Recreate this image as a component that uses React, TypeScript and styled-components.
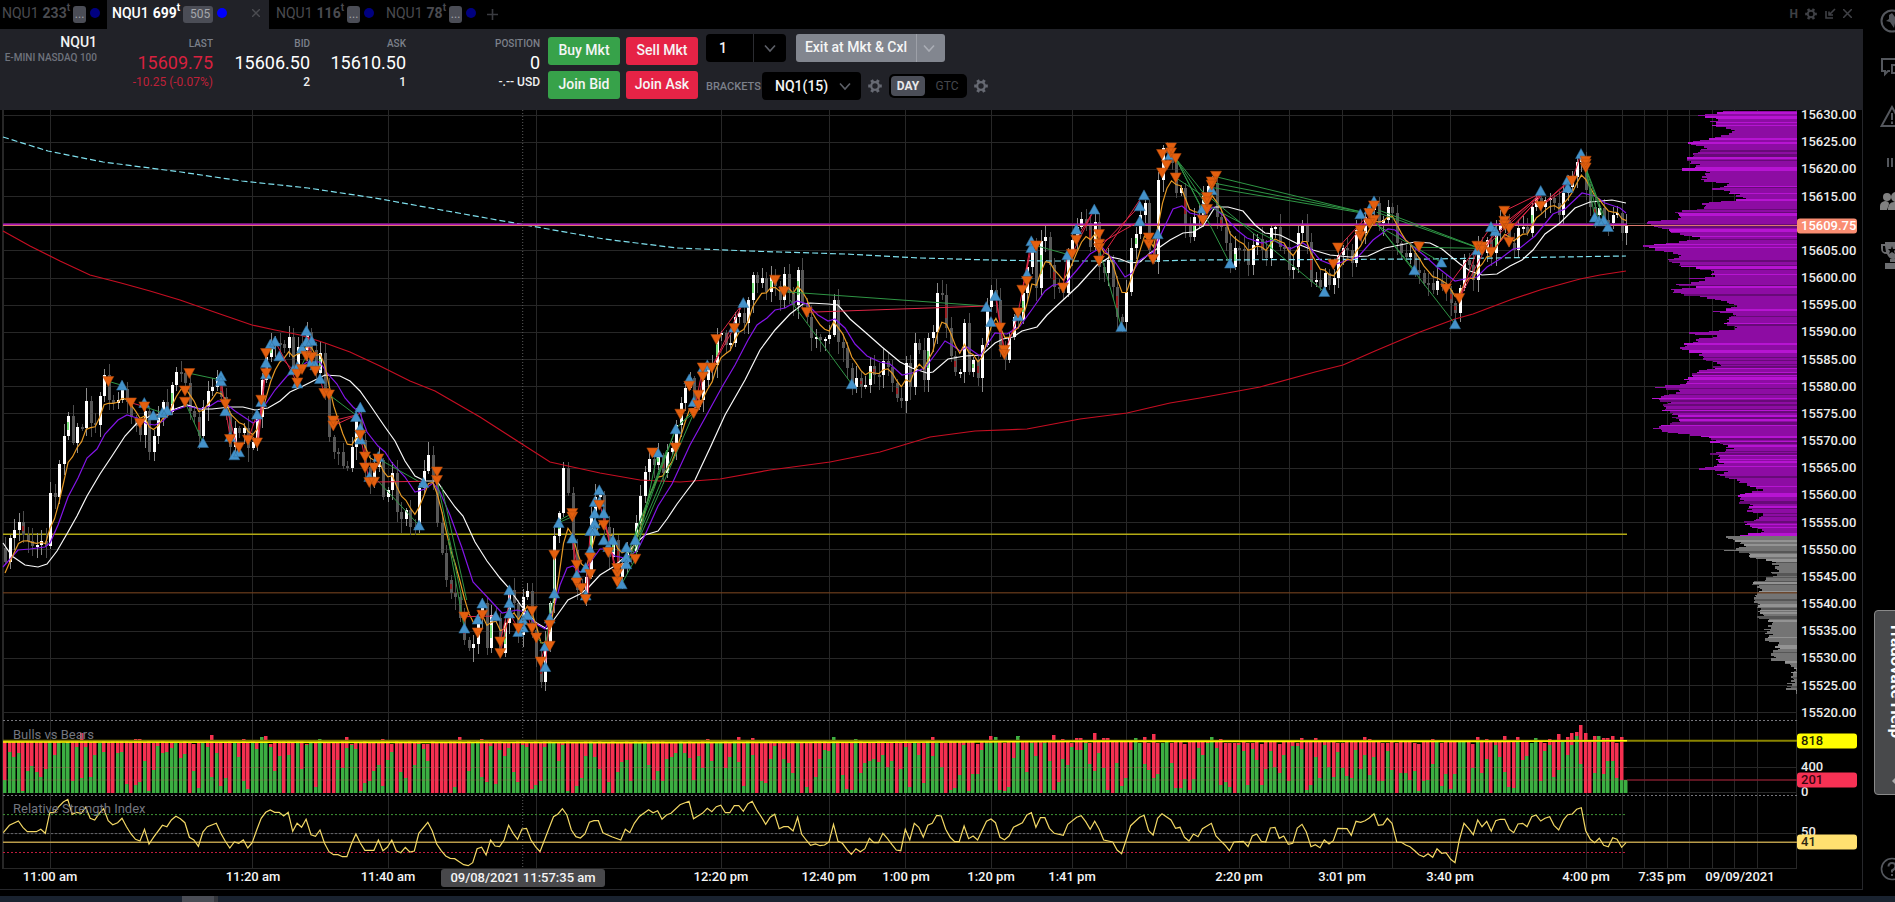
import React from "react";
import styled, { createGlobalStyle } from "styled-components";

/* ---------- series data ---------- */

const nums = (s: string) => s.trim().split(/[\s,;]+/).map(Number);

type Pt = [number, number];
const pairs = (s: string, ox = 0, oy = 0, kx = 1, ky = 1): Pt[] => {
  const n = nums(s);
  const out: Pt[] = [];
  for (let i = 0; i + 1 < n.length; i += 2) out.push([ox + n[i] * kx, oy + n[i + 1] * ky]);
  return out;
};
const T = 1 / 3;
const W = 640 / 1568;
const toPoints = (p: Pt[]) => p.map(([x, y]) => `${x.toFixed(1)},${y.toFixed(1)}`).join(" ");
const noise = (i: number, s = 1) => {
  const v = Math.sin(i * 127.1 + s * 311.7) * 43758.5453;
  return v - Math.floor(v);
};
const barX = (i: number) => 5 + i * 4.504;

const CLOSE_RUNS: { start: number; base: number; k: number; v: string }[] = [
  { start: 0, base: 300, k: T, v: "785 715 690 665 705 722 738 736 722 738 578 590 492 408 347 430 380 383 302 370 375 287 225 300 310 300 268 305 352 378 405 333 455 408 350 307 335 255 217 220 250 333 350 407 322 273 260 230 290 340 440 385 400 385 445 425 350 240 170 135 130 132 145 112 205 140 150 95 150 220 160 270 410 455 457 498 505 440 360 420 500 550 500 480 590 570 518 635 657 630 680 685 565 512 465 540 668 758 840 880" },
  { start: 100, base: 540, k: T, v: "170 235 300 325 312 230 190 325 225 235 340 250 150 190 285 170 152 270 350 425 305 190" },
  { start: 122, base: 300, k: T, v: "708 640 505 580 750 870 880 830 655 590 585 680 770 720 830 790 740 755 670 587 515 478 495 465 520 455 445 375 308 265 235 320 300 240 205 195 105 100 135 130 50 40 70 0" },
  { start: 166, base: 0, k: 1, v: "275 283 278 292 276 286 300 274" },
  { start: 174, base: 120, k: T, v: "520 555 450 550 590 655 650 660 658 645 540 665 685 745 800 775 800 795 738 765 765 722 740 790 835 843 730 800 670 690 780 655 637 518 525 625 708 757 755 610 755 720 775 675 560 510 540 690 720 650 590 600 520 440 365 505 362 352 435 500 500 520 405 360 320 298 310 380 305 440 458 420 500 590 605 515 385 342 285 248 390 425 180 85 100 130 220 205 315 350 290 285 225 197 190 290 320 370 440 385 388 390 435 375 358 390 415 325 322 380 380 450 440 340 312 365 485 480 500 458 495 475 405 385 390 430 330 340 290 270 250 310 300 262 280 370 400 410 400 450 460 490 490 510 483 500 510 550 580 503 420 435 480 375 400 360 400 330 310 300 370 390 325 322 340 262 235 260 240 235 250 285 220 200 170 125 110 210 260 285 265 300 310 285 280 340 315" },
];
const CLOSES: number[] = [];
CLOSE_RUNS.forEach((r) => nums(r.v).forEach((v, k) => { CLOSES[r.start + k] = r.base + v * r.k; }));
CLOSES.length = 361;

const EMA: Pt[] = [];
CLOSES.reduce((prev, c, i) => {
  const next = prev + (c - prev) * 0.3;
  EMA.push([barX(i), next]);
  return next;
}, 578);

const MID_MA = pairs("3,567 18,550 30,549 45,547 50,543 58,525 68,497 78,478 87,458 97,449 105,434 118,420 127,415 137,418 147,424 155,425 163,421 172,411 187,406 200,409 210,406 218,401 224,402 235,411 247,419 253,423 258,420 265,405 275,390 287,376 297,369 307,362 320,362 327,373 337,384 345,398 353,407 360,413 367,432 378,446 385,452 392,463 405,477 415,492 425,489 433,483 440,492 450,515 462,548 473,582 490,600 502,613 517,610 525,612 530,618 538,625 545,629 553,611 560,585 567,568 573,566 580,572 585,570 592,560 600,549 606,549 615,556 625,558 637,551 645,535 658,506 672,484 690,445 705,418 722,387 735,365 748,340 757,325 767,318 775,310 785,308 797,301 807,304 818,315 828,321 835,319 845,328 855,344 867,356 880,362 890,364 902,375 912,373 925,368 937,352 945,341 952,345 960,351 967,347 980,356 987,345 995,333 1007,334 1020,326 1033,308 1045,291 1053,285 1065,284 1077,270 1090,254 1102,247 1115,262 1125,277 1132,273 1140,260 1153,252 1163,230 1173,209 1182,206 1190,213 1203,216 1213,207 1225,217 1237,230 1247,238 1262,243 1273,240 1290,249 1303,243 1310,248 1320,260 1333,265 1345,261 1358,257 1373,240 1388,229 1395,230 1410,244 1425,256 1437,267 1455,281 1465,279 1477,277 1487,267 1500,259 1513,249 1520,248 1535,236 1553,214 1565,209 1582,193 1595,196 1605,203 1620,208 1626,213");
const SLOW_MA = pairs("3,543 12,556 25,565 38,567 47,564 57,551 68,532 77,516 87,496 100,474 112,456 125,436 137,423 150,416 163,414 175,409 187,405 200,409 212,409 230,407 243,407 255,410 268,408 280,401 290,392 303,386 315,380 325,375 340,376 350,381 360,391 370,405 385,427 395,441 405,461 415,476 425,481 437,481 443,490 455,507 463,516 475,542 487,561 500,578 508,587 522,607 535,622 547,629 558,614 568,600 580,594 588,588 600,575 613,567 625,557 635,544 645,535 658,531 667,519 677,504 695,480 710,448 725,415 745,380 760,350 775,330 790,314 803,304 810,303 828,304 838,305 850,319 865,332 882,347 900,362 912,368 927,373 933,372 948,359 965,356 982,355 995,343 1003,339 1013,337 1022,331 1037,327 1047,315 1062,301 1078,286 1097,265 1110,257 1120,259 1130,263 1140,262 1150,253 1160,247 1170,240 1183,233 1193,232 1203,226 1215,207 1228,207 1243,211 1255,225 1265,233 1280,235 1300,245 1313,250 1330,255 1350,257 1368,256 1385,248 1400,245 1415,242 1430,243 1442,249 1460,264 1470,271 1482,275 1497,274 1510,266 1522,260 1533,250 1545,234 1560,223 1575,208 1590,202 1612,200 1626,203");
const LONG_MA = pairs("3,231 30,246 60,261 90,275 121,283 150,291 180,300 220,314 252,325 275,330 300,335 325,343 350,352 380,366 410,381 435,391 480,417 508,435 550,462 600,473 640,480 680,482 720,479 770,470 830,462 880,452 930,437 975,431 1027,429 1080,419 1127,413 1170,403 1200,398 1260,387 1315,372 1343,365 1375,351 1420,332 1455,319 1473,314 1510,300 1540,290 1580,279 1600,275 1626,271");
const VWAP = pairs("3,137 48,151 103,162 181,172 242,181 308,188 375,198 447,211 520,224 604,239 677,248 749,251 780,252 845,254 920,258 990,260 1050,261 1150,261 1200,260 1430,259 1560,257 1626,256");

const BUYS: Pt[] = [
  ...pairs("366,256 433,308 460,346 487,338 501,331 609,428 663,228 663,243 676,333 703,465 717,456 690,410 771,343 784,305 798,188 798,222 811,133 825,124 838,168 879,210 892,200 892,250 906,145 919,92 919,125 935,122 933,186 946,195 960,236 1068,350 1081,322 1081,385 1081,418 1108,530 1135,470 1257,676 1270,548", 0, 300, T, T),
  ...pairs("133,265 173,238 187,190 227,228 268,150 268,188 268,220 295,275 309,262 309,240 322,225 376,318 376,380 389,235 403,160", 420, 540, T, T),
  ...pairs("476,668 517,715 530,825 557,803 557,886 571,692 571,750 584,605 584,640 584,670 584,692 598,570 598,605 611,640 611,720 638,720 625,740 665,852 679,742 679,772 679,792 706,720 773,457 827,387 868,237 881,305 908,205 922,195 1003,82 1030,8 1355,252", 400, 300, T, T),
  ...pairs("619,560 633,605 646,527 714,588 741,462 754,363 754,383 862,405 889,328 943,268 1024,620 1079,258 1079,303 1092,225 1133,342 1170,105 1268,265 1295,210", 780, 120, T, T),
  ...pairs("90,430 373,515 481,282 522,243 508,268 643,450 724,427 765,612 832,390 873,320 886,333 1022,212 1103,180 1103,203 1143,101 1184,292 1197,303 1211,300 1224,320", 1200, 120, T, T),
];
const SELLS: Pt[] = [
  ...pairs("325,244 393,308 433,320 420,370 555,272 555,306 568,220 676,312 690,418 717,442 744,420 771,428 784,300 798,160 798,220 892,222 906,208 892,248 919,168 935,172 946,213 973,280 987,284 1000,362 1000,377 1081,405 1095,470 1095,503 1108,547 1122,503 1122,546 1135,476 1311,515 1311,541", 0, 300, T, T),
  ...pairs("133,230 173,278 187,225 241,305 241,340 295,265 336,213 336,265 349,293 362,365 389,255 389,318 403,45", 420, 540, T, T),
  ...pairs("517,640 517,650 530,795 530,848 544,865 557,898 571,773 571,823 598,615 611,675 625,757 652,805 652,822 652,845 706,777 757,458 827,443 841,342 868,258 881,340 895,285 895,315 908,203 908,230 935,203 949,118 1003,85 1125,-60", 400, 300, T, T),
  ...pairs("12,515 80,577 660,623 673,690 673,703 714,578 727,510 741,484 768,377 849,503 876,402 889,360 957,343 957,372 957,385 957,422 1106,353 1106,373 1119,418 1146,103 1146,158 1160,135 1173,83 1173,98 1187,115 1187,173 1268,300 1281,232 1281,245 1281,268 1295,185 1295,195 1308,168", 780, 120, T, T),
  ...pairs("414,383 400,433 481,330 481,348 508,280 508,310 522,257 522,300 657,380 738,506 778,535 832,378 846,380 846,390 873,396 913,273 913,303 913,315 927,325 927,366 1022,258 1116,182 1157,123 1157,132 1157,143", 1200, 120, T, T),
];

const WINS: Pt[] = [
  ...pairs("325,244 366,256 568,220 663,240 433,320 487,338 555,306 609,428 892,222 919,168 987,284 1068,345 1135,476 1257,545 1122,530 1257,676 1311,541 1387,900 1325,560 1400,900", 0, 300, T, T),
  ...pairs("85,0 133,265 376,318 403,160 349,293 376,318 381,330 391,190", 420, 540, T, T),
  ...pairs("476,668 517,650 476,662 517,640 706,777 773,457 679,772 827,387 679,792 827,443 706,720 827,387 690,780 881,340 706,700 800,450 463,880 463,765 665,852 706,777 827,387 881,330 841,370 881,340 1170,0 1355,252", 400, 300, T, T),
  ...pairs("12,515 619,558 768,377 862,403 957,385 1024,620 1187,115 1281,232 1187,115 1268,270 1187,115 1275,250 1187,173 1281,235 1187,115 1349,430", 780, 120, T, T),
  ...pairs("55,172 481,275 45,190 481,275 40,203 481,278 535,270 832,382 530,277 832,383 530,310 643,450 530,315 724,427 657,382 832,385 0,208 373,515 30,260 240,370 530,310 765,612 1157,145 1184,290 1157,145 1211,300 1160,150 1224,320 1157,150 1197,300", 1200, 120, T, T),
];
const LOSSES: Pt[] = [
  ...pairs("393,308 433,320 663,243 690,410 676,312 717,456 744,420 771,343 771,428 798,188 775,428 800,180 825,124 892,248 838,168 892,222 919,125 946,213 925,110 935,186 960,236 973,280 1000,362 1068,345 1000,377 1081,340 1081,405 1108,547 1122,546 1270,544", 0, 300, T, T),
  ...pairs("133,230 227,228 241,340 268,220 241,305 268,188 268,220 295,265 322,225 336,265 376,380 389,235 268,188 268,150 362,365 376,318", 420, 540, T, T),
  ...pairs("517,715 544,865 517,700 530,848 557,886 571,692 565,880 571,750 611,640 652,845 598,605 652,822 908,205 881,340 895,315 908,230 949,118 1030,8 935,203 1003,82 935,203 1030,8", 400, 300, T, T),
  ...pairs("80,577 619,558 646,527 673,690 650,540 673,700 673,700 714,588 714,578 754,383 727,510 754,363 849,503 862,405 876,402 943,268 889,360 943,268 957,385 1079,258 957,372 1079,303 957,422 1079,240 1119,418 1133,342 1160,135 1173,98", 780, 120, T, T),
  ...pairs("400,430 508,290 414,383 500,290 738,506 832,380 778,535 832,390 778,535 886,330 832,380 873,320 846,390 1022,225 846,380 1022,220 873,396 1022,228 913,273 1022,220 913,310 1022,225 927,330 1022,230 1022,258 1103,185 1022,258 1103,203 1030,250 1103,190 1116,182 1143,101", 1200, 120, T, T),
];

const BULL_RUNS: { start: number; v: string }[] = [
  { start: 0, v: "240 155 170 160 272 213 198 217 232 208 130 165 130 130 130 243 140 233 142 231 165 130 157 278 278 160 155 251 278 255 247 182 273 209 137 158 155 143 130 174 162 278 213 264 130 142 232 160 258 234 278 130 170 243 268 130 146 112 130 140 212 167 278 165 278 130 206 136 130 262 118 278 278 278 179 205 143 135 148 274 250 244 213 196 258 181 157 278 216 234 278 195 133 146 184 278 278 278 278 278 261 278 278 212 130 130 232 246 137 251 150 167 144 216 246 134 140 268 256 244 141 130 130 183 135 273 278 258 235 168 130 172 208 278 246 278 217 187 180 244 130 130" },
  { start: 142, v: "130 196 240 212 243 178 170 158 123 158 174 240 167 203 130 183 130 130 205 170 120 186 258 130 165 278 242 250 177 138 278 178 190 218 130 278 262 278 230 178 150 152 112 278 225 267 270 116 220 190 184 178 186 165 202 184 278 208 140 262 130 165 248 130 168 130 202 278 270 264 226 134 273 222 223 150 130 130 112 270 273 262 174 107 150 217 130 167 278 130 183 270 246 178 195 140 150 150 130 192 213 160 203 270 278 189 258 234 150 113 130 193 209 234 222 130 120 189 264 265 238 270 238 143 166 130 112 144 255 246 261 278 135" },
  { start: 275, v: "154 255 147 180 254 207 154 202 220 165 244 138 139 147 270 256 171 234 136 202 230 156 203 228 234 149 206 166 225 172 243 243 153 210 278 219 219 240 213 272 244 240 193 124 259 221 267 221 127 125 278 204 124 219 178 278 135 171 217 262 264 120 180 168 128 115 244 154 136 231 209 125 165 135 108 192 278 278 220 107 221 183 184 235 240 240" },
];
const BULLS: number[] = [];
BULL_RUNS.forEach((r) => nums(r.v).forEach((v, k) => { BULLS[r.start + k] = v; }));
const PEAKS: Record<number, number> = {
  17: 98, 29: 118, 30: 116, 46: 104, 53: 117, 58: 108, 76: 110, 84: 117, 101: 112, 106: 118, 156: 116, 163: 110, 166: 113, 206: 110, 219: 108,
  225: 112, 233: 104, 235: 116, 238: 114, 239: 113, 242: 98, 244: 114, 245: 114, 253: 110, 255: 102, 270: 116, 288: 114, 291: 115, 302: 110, 303: 116,
  317: 117, 327: 111, 329: 116, 333: 108, 336: 110, 343: 116, 345: 101, 347: 112, 348: 99, 349: 95, 350: 75, 351: 98, 353: 107, 355: 115, 356: 113, 357: 108, 359: 110, 360: 240,
};

const RSI: Pt[] = [
  ...pairs("8,398 23,376 45,363 56,382 67,395 89,395 100,388 111,400 122,338 133,338 144,320 155,306 166,298 177,343 188,337 199,340 210,322 221,355 232,360 243,340 254,326 265,362 276,374 288,368 299,355 310,380 321,402 332,418 343,423 354,388 365,432 376,412 398,376 409,380 420,360 431,349 442,356 453,368 464,412 475,420 486,439 497,396 508,380 530,370 541,400 552,424 563,444 574,426 585,430 596,420 607,444 618,428 629,390 640,355 651,337 662,330 673,337 684,337 695,348 706,337 717,394 728,370 739,382 750,358 762,404 773,409 784,390 795,430 806,455 817,464 828,464 839,470 850,470 861,432 872,402 883,430 894,451 916,451 927,420 938,452 949,442 960,420 971,452 982,458 993,442 1004,456 1015,453 1026,400 1048,367 1059,392 1070,432 1081,452 1092,468 1103,475 1114,476 1125,485 1136,494 1147,497 1158,488 1169,446 1180,442 1191,465 1202,420 1213,438 1224,440 1235,420 1246,376 1257,400 1268,418 1279,387 1290,385 1301,420 1312,440 1323,455 1334,420 1345,385 1356,350 1367,342 1378,326 1389,345 1400,390 1411,410 1422,414 1433,402 1444,367 1455,362 1466,362 1477,398 1499,410 1521,420 1532,388 1543,398 1554,370 1566,350", 0, 700, W, T),
  ...pairs("0,348 21,329 32,338 43,332 54,358 65,345 76,340 98,314 120,304 131,356 153,340 165,325 176,335 187,320 198,316 209,338 220,338 231,317 242,317 253,334 264,312 275,304 286,330 297,350 308,373 319,352 330,343 341,386 352,380 363,380 375,393 386,352 396,402 407,420 418,436 430,432 441,437 452,435 463,426 474,373 485,424 496,430 507,448 518,463 529,446 540,455 551,446 562,415 573,428 584,428 595,400 606,415 617,433 628,450 639,452 650,388 661,420 672,370 683,382 694,412 705,376 716,370 727,346 738,348 749,388 760,412 771,425 782,425 794,378 805,416 816,408 827,420 838,392 849,364 860,357 871,368 882,412 893,419 904,408 915,382 937,368 948,345 959,338 970,382 981,353 992,353 1003,385 1015,400 1037,406 1048,373 1070,352 1081,347 1092,365 1103,388 1114,364 1125,388 1136,420 1158,426 1169,450 1180,461 1191,420 1202,377 1224,352 1235,346 1246,392 1257,405 1268,355 1279,341 1301,360 1312,385 1323,382 1334,412 1345,423 1356,402 1367,410 1378,386 1400,370 1411,408 1422,422 1433,435 1444,452 1455,426", 640, 700, W, T),
  ...pairs("10,424 24,440 37,408 50,402 64,424 77,426 91,384 105,382 118,415 131,408 145,433 158,430 172,384 186,373 199,396 213,440 226,434 240,443 253,420 267,432 280,422 293,385 321,386 334,406 348,364 362,367 375,362 388,354 402,341 415,376 429,374 442,355 456,370 470,426 484,427 497,435 510,440 524,452 537,464 551,470 564,461 578,472 591,446 605,460 618,458 632,478 645,488 658,420 672,370 686,386 700,404 713,360 726,380 740,364 754,394 767,362 781,358 794,358 808,388 821,398 834,372 848,370 861,380 875,350 888,345 902,363 915,355 929,350 942,376 956,390 970,360 983,344 997,342 1010,328 1024,323 1037,392 1051,418 1064,428 1078,415 1091,436 1105,440 1118,413 1131,418 1145,442 1158,428", 1240, 700, T, T),
];

/* left edge of the volume profile: y, x */
const PROFILE = pairs("333,375 346,290 352,340 378,335 385,400 405,370 427,265 440,320 460,275 480,255 495,300 509,228 513,320 540,300 550,400 565,335 580,410 597,425 607,315 620,320 637,213 650,260 665,130 672,140 685,180 700,240 715,310 737,135 745,150 755,205 765,240 780,205 797,250 810,320 825,350 835,270 840,320 852,220 858,280 868,202 880,240 895,330 915,425 933,340 945,410 967,360 985,415 998,258 1006,340 1015,300 1030,260 1048,243 1060,300 1080,315 1095,360 1110,305 1130,260 1150,250 1162,160 1168,240 1175,240 1194,148 1205,210 1227,180 1245,220 1260,240 1284,160 1295,200 1310,310 1335,370 1345,400 1357,340 1380,350 1390,370 1406,290 1411,400 1422,348 1440,405 1455,440 1468,480 1488,410 1505,420 1515,460 1530,445 1540,490 1555,460 1570,425 1583,460 1595,500 1603,430 1610,380 1625,420 1640,425 1650,375 1655,430 1668,440 1680,500 1695,535 1708,520 1725,530 1740,475 1750,460 1765,485 1775,460 1795,462 1815,475 1830,485 1850,480 1870,515 1890,495 1905,515 1916,495 1930,535 1955,520 1978,516 1990,570 2005,590 2030,570 2045,575 2062,562 2075,588 2081,591").map(([y, x]): Pt => [y * T, 1600 + x * T]);

const PROFILE_ROWS = Array.from({ length: 429 }, (_, i) => {
  const y = 111 + i * 1.3585;
  let k = PROFILE.findIndex(([py]) => py > y);
  if (k < 1) k = k === 0 ? 1 : PROFILE.length - 1;
  const [y0, x0] = PROFILE[k - 1];
  const [y1, x1] = PROFILE[k];
  const f = Math.min(1, Math.max(0, (y - y0) / (y1 - y0)));
  const x = x0 + (x1 - x0) * f + (noise(i, 4) - 0.4) * 9;
  return { y, x: Math.min(1796, x), tone: noise(i, 7) };
});

const TIMES = [
  { x: 50, t: "11:00 am" }, { x: 253, t: "11:20 am" }, { x: 388, t: "11:40 am" }, { x: 721, t: "12:20 pm" }, { x: 829, t: "12:40 pm" },
  { x: 906, t: "1:00 pm" }, { x: 991, t: "1:20 pm" }, { x: 1072, t: "1:41 pm" }, { x: 1239, t: "2:20 pm" }, { x: 1342, t: "3:01 pm" },
  { x: 1450, t: "3:40 pm" }, { x: 1586, t: "4:00 pm" }, { x: 1662, t: "7:35 pm" }, { x: 1740, t: "09/09/2021" },
];
const V_GRID = [50, 252, 388, 536, 721, 829, 905, 991, 1072, 1126, 1239, 1289, 1342, 1392, 1450, 1586, 1622, 1644, 1667, 1689, 1712, 1734, 1757];
const PRICES = Array.from({ length: 23 }, (_, i) => 15630 - i * 5);
const PLOT_W = 1797;
const priceY = (p: number) => 115.5 + (15630 - p) * 5.434;

/* ---------- styles ---------- */

const Global = createGlobalStyle`
  *, *::before, *::after { box-sizing: border-box; }
  body { margin: 0; background: #000; color: #f4f4f4; font-family: Roboto, "Liberation Sans", sans-serif; overflow: hidden; }
  button, input, select { font: inherit; color: inherit; border: 0; margin: 0; padding: 0; background: none; }
  button { cursor: pointer; }
`;
const Shell = styled.div`display: flex; flex-direction: column; height: 100vh;`;
const Body = styled.div`display: flex; flex: 1; min-height: 0;`;
const Workspace = styled.main`display: flex; flex-direction: column; flex: 1; min-width: 0; padding-bottom: 6px;`;

const TabBar = styled.nav`display: flex; height: 29px; align-items: stretch; background: #000;`;
const Tab = styled.button<{ $active?: boolean; $w: number; $pad: number }>`
  display: flex; align-items: center; flex: 0 0 ${(p) => p.$w}px; padding: 0 0 3px ${(p) => p.$pad}px;
  font-size: 14px; font-weight: ${(p) => (p.$active ? 500 : 400)}; white-space: nowrap;
  color: ${(p) => (p.$active ? "#fff" : "#4a4b50")}; background: ${(p) => (p.$active ? "#212228" : "#000")};
  b { margin-left: 4px; font-weight: 700; }
  sup { font-size: 10px; line-height: 8px; align-self: flex-start; margin-top: 4px; font-weight: 700; }
`;
const Chip = styled.span<{ $wide?: boolean }>`
  width: ${(p) => (p.$wide ? 30 : 13)}px; height: 17px; margin: 3px 4px 0 3px; padding-right: ${(p) => (p.$wide ? 3 : 0)}px; border-radius: 3px;
  background: #4b4d56; color: #a4a6ab; font-size: 12px; line-height: 16px; font-weight: 400; text-align: ${(p) => (p.$wide ? "right" : "center")};
`;
const Dot = styled.span<{ $on?: boolean }>`width: 10px; height: 10px; border-radius: 50%; background: ${(p) => (p.$on ? "#0000fe" : "#000080")};`;
const CloseMark = styled.span`margin-left: auto; padding-right: 9px; display: flex; color: #4b4c51;`;
const AddTab = styled.button`display: flex; align-items: center; padding-left: 10px; color: #3a3b40;`;
const WindowTools = styled.div`
  display: flex; align-items: center; gap: 7px; margin-left: auto; padding: 0 11px 2px 0; color: #3f4045; font-size: 12px; font-weight: 700;
  button { display: flex; }
`;

const Header = styled.header`display: flex; height: 81px; background: #212228; white-space: nowrap; overflow: hidden;`;
const Stat = styled.div<{ $w: number }>`flex: 0 0 ${(p) => p.$w}px; text-align: right; padding-top: 8px;`;
const StatLabel = styled.div`font-size: 10px; line-height: 14px; font-weight: 500; color: #7c808a;`;
const StatMain = styled.div<{ $red?: boolean }>`font-size: 18px; line-height: 23px; color: ${(p) => (p.$red ? "#d8213f" : "#fff")};`;
const StatSub = styled.div<{ $red?: boolean }>`font-size: 12px; line-height: 16px; font-weight: ${(p) => (p.$red ? 400 : 500)}; color: ${(p) => (p.$red ? "#bf2139" : "#f0f0f0")};`;
const TickerName = styled.div`font-size: 14px; font-weight: 500; line-height: 18px; margin-top: -4px;`;
const ProductName = styled.div`font-size: 10px; font-weight: 500; line-height: 14px; color: #6f737d;`;

const OrderGrid = styled.div`display: grid; grid-template-columns: 72px 72px; grid-auto-rows: 28px; gap: 6px; padding: 8px 0 0 8px; align-content: start;`;
const OrderButton = styled.button<{ $sell?: boolean }>`
  border-radius: 3px; background: ${(p) => (p.$sell ? "#e62346" : "#37a24a")}; color: #f5f5f5; font-size: 14px; font-weight: 500; line-height: 26px; padding-bottom: 2px;
`;
const Controls = styled.div`display: flex; flex-direction: column; gap: 10px; padding: 5px 0 0 8px;`;
const ControlRow = styled.div`display: flex; align-items: center; height: 28px;`;
const Qty = styled.div`
  display: flex; width: 80px; height: 28px; border-radius: 4px; background: #000; margin-right: 10px;
  input { width: 47px; padding-left: 13px; font-size: 14px; font-weight: 500; outline: 0; }
  button { flex: 1; display: flex; align-items: center; justify-content: center; border-left: 1px solid #2b2c31; color: #5d6068; }
`;
const ExitGroup = styled.div`
  display: flex; height: 28px; width: 149px; border-radius: 3px; overflow: hidden; background: #82868f;
  button:first-child { width: 120px; font-size: 14px; font-weight: 500; padding: 0 0 2px; color: #f5f5f5; }
  button:last-child { flex: 1; display: flex; align-items: center; justify-content: center; padding-right: 4px; border-left: 1px solid #9da0a8; color: #aaadb5; }
`;
const BracketLabel = styled.label`width: 56px; font-size: 11px; font-weight: 500; color: #7c808a;`;
const SelectBox = styled.div`
  position: relative; width: 99px; height: 28px; border-radius: 4px; background: #000;
  select { appearance: none; width: 100%; height: 28px; padding-left: 13px; font-size: 14px; font-weight: 500; outline: 0; }
  svg { position: absolute; right: 10px; top: 8px; color: #5d6068; pointer-events: none; }
`;
const IconButton = styled.button`display: flex; width: 28px; justify-content: center; color: #676a73;`;
const Toggle = styled.div`display: flex; width: 78px; height: 24px; padding: 2px; border-radius: 5px; background: #000;`;
const ToggleOption = styled.button<{ $on?: boolean }>`
  flex: ${(p) => (p.$on ? "0 0 34px" : "1")}; border-radius: 4px; font-size: 12px; font-weight: ${(p) => (p.$on ? 700 : 400)};
  padding-left: ${(p) => (p.$on ? 0 : 4)}px; color: ${(p) => (p.$on ? "#e8e8ea" : "#45474d")}; background: ${(p) => (p.$on ? "#4b4e58" : "transparent")};
`;

const ChartFrame = styled.section`
  flex: 1; min-height: 0; display: grid; grid-template-columns: 1fr 65px; grid-template-rows: 1fr 20px;
  border: solid #26272b; border-width: 0 1px 1px 0;
`;
const Plot = styled.div`
  position: relative; min-width: 0; min-height: 0;
  > svg { display: block; width: 100%; height: 100%; }
`;
const PaneTitle = styled.span`position: absolute; left: 13px; transform: translateY(-50%); font-size: 13px; line-height: 16px; color: #73767f;`;
const PriceAxis = styled.div`display: flex; flex-direction: column; min-height: 0; font-size: 13px; font-weight: 500; color: #ececec;`;
const AxisPane = styled.div<{ $share: number; $clip?: boolean }>`
  position: relative; flex: ${(p) => p.$share} 1 0; min-height: 0; overflow: ${(p) => (p.$clip ? "hidden" : "visible")};
`;
const Ladder = styled.div`
  display: flex; flex-direction: column; justify-content: space-between; position: absolute; inset: -3px 0 -1px 4px;
  span { height: 16px; line-height: 16px; }
`;
const AxisMark = styled.span`position: absolute; left: 4px; line-height: 16px; transform: translateY(-50%);`;
const Badge = styled.span<{ $bg: string; $fg: string }>`
  position: absolute; left: 0; width: 60px; height: 15px; padding-left: 4px; border-radius: 3px; line-height: 14px; transform: translateY(-50%);
  background: ${(p) => p.$bg}; color: ${(p) => p.$fg};
`;
const TimeAxis = styled.div`
  position: relative; font-size: 13px; font-weight: 500; line-height: 16px; white-space: nowrap;
  span { position: absolute; transform: translateX(-50%); }
`;
const CrossLabel = styled.b`
  position: absolute; top: 0; z-index: 1; width: 164px; height: 18px; border-radius: 3px; transform: translateX(-50%);
  background: #48484b; text-align: center; font-weight: 500; line-height: 18px;
`;

const Sidebar = styled.aside`
  flex: 0 0 32px; display: flex; flex-direction: column; overflow: hidden; color: #54575d;
  svg { flex: none; display: block; }
`;
const SideButton = styled.button<{ $top: number }>`display: block; width: 40px; height: 24px; padding-left: 17px; margin-top: ${(p) => p.$top}px; color: inherit;`;
const HelpTab = styled.button`
  display: flex; align-items: center; justify-content: space-between; writing-mode: vertical-rl; flex: none; width: 46px; height: 185px; margin: 345px 0 0 11px; padding: 11px 0 8px;
  border: 1px solid #8a8a8a; border-radius: 4px; background: #48494b; color: #fff; font-size: 17px; font-weight: 700; line-height: 22px; white-space: nowrap;
  svg { color: #aaa; }
`;
const Strip = styled.footer`
  height: 6px; background: #1a2330; padding-left: 182px;
  div { width: 36px; height: 6px; background: #4a4d55; border-right: 4px solid #34373d; }
`;

/* ---------- icons ---------- */

const Chevron = () => (
  <svg width="12" height="12" viewBox="0 0 12 12" fill="none" stroke="currentColor" strokeWidth="1.6"><path d="M1 3.5 6 9l5-5.5" /></svg>
);
const Cross = ({ size = 8 }: { size?: number }) => (
  <svg width={size} height={size} viewBox="0 0 8 8" stroke="currentColor" strokeWidth="1.4"><path d="M0 0l8 8M8 0L0 8" /></svg>
);
const Gear = ({ size }: { size: number }) => (
  <svg width={size} height={size} viewBox="0 0 14 14" fill="none" stroke="currentColor">
    <circle cx="7" cy="7" r="3.8" strokeWidth="2.2" />
    {[0, 60, 120, 180, 240, 300].map((a) => <path key={a} d="M7 .2v2.5" strokeWidth="3" transform={`rotate(${a + 30} 7 7)`} />)}
  </svg>
);

/* ---------- chart ---------- */

const Line = ({ p, c, dash }: { p: Pt[]; c: string; dash?: string }) => (
  <polyline points={toPoints(p)} fill="none" stroke={c} strokeWidth="1.2" strokeDasharray={dash} />
);
const Links = ({ p, c }: { p: Pt[]; c: string }) => (
  <path d={p.map(([x, y], i) => `${i % 2 ? "L" : "M"}${x.toFixed(1)} ${y.toFixed(1)}`).join("")} stroke={c} strokeWidth="1" fill="none" />
);

function Candles() {
  return (
    <g shapeRendering="crispEdges">
      {CLOSES.map((c, i) => {
        const open = i ? CLOSES[i - 1] : c - 14;
        const up = c < open;
        const top = Math.min(open, c);
        const h = Math.max(2, Math.abs(open - c));
        const x = Math.round(barX(i)) - 1;
        const tint = h > 8 && noise(i, 3) < 0.24;
        return (
          <g key={i}>
            <rect x={x + 1} y={top - 2 - noise(i, 1) * 11} width="1" height={h + 4 + noise(i, 1) * 11 + noise(i, 2) * 12} fill={up ? "#8b8b8b" : "#4c4c4c"} />
            <rect x={x} y={top} width="3" height={h} fill={up ? "#fff" : "#585858"} />
            {tint && <rect x={x} y={top + h * 0.3} width="2" height={h * 0.4} fill={up ? "#79e67d" : "#981f22"} />}
          </g>
        );
      })}
    </g>
  );
}

function BullBars() {
  return (
    <g shapeRendering="crispEdges">
      {BULLS.map((g, i) => {
        const total = PEAKS[i] ?? Math.min(g, 122 + Math.round(noise(i, 9) * (i % 5 === 0 ? 1 : 9)));
        const x = 3 + i * 4.504;
        return (
          <g key={i}>
            <rect x={x} y={700 + total / 3} width="4" height={(278 - total) / 3} fill="#f53050" />
            <rect x={x} y={700 + g / 3} width="4" height={(278 - g) / 3} fill="#3cae42" />
            <rect x={x + 3} y={700 + total / 3} width="1.5" height={(278 - total) / 3} fill="#000" opacity=".5" />
          </g>
        );
      })}
    </g>
  );
}

function Chart() {
  return (
    <svg viewBox="0 110 1797 759" preserveAspectRatio="none" role="img" aria-label="NQU1 tick chart">
      <g fill="#272727" shapeRendering="crispEdges">
        <rect x="2" y="110" width="2" height="759" />
        {V_GRID.map((x) => <rect key={x} x={x} y="110" width="1" height="759" />)}
        {PRICES.map((p) => <rect key={p} x="3" y={Math.round(priceY(p)) - 1} width="1794" height="1" />)}
        <rect x="3" y="767" width="1794" height="1" />
        <rect x="3" y="792" width="1794" height="1" />
        <rect x="3" y="833" width="1794" height="1" />
        <rect x="3" y="868" width="1794" height="1" />
        <rect x="1796" y="110" width="1" height="759" />
      </g>
      <path d="M3 720.5H1797M3 795.5H1797" stroke="#77777d" strokeDasharray="2 2" />
      {PROFILE_ROWS.map((r, i) => {
        const purple = r.y < 535;
        const shade = r.tone > 0.8 ? 2 : r.tone < 0.16 ? 0 : 1;
        const fill = purple ? ["#680a78", "#8d0ca3", "#b714d2"][shade] : ["#565656", "#747474", "#939393"][shade];
        return <rect key={i} shapeRendering="crispEdges" x={r.x} y={r.y} width={1797 - r.x} height="1.4" fill={fill} />;
      })}
      <path d="M3 592.8H1797" stroke="#6b3d1c" strokeWidth="1.4" opacity=".8" />
      <path d="M3 534.3H1627" stroke="#b3aa14" strokeWidth="1.4" />
      <Candles />
      <Line p={LONG_MA} c="#c60e22" />
      <Line p={VWAP} c="#7fe0ee" dash="6 3" />
      <path d="M3 224.5H1627" stroke="#ac14b4" strokeWidth="2" />
      <path d="M3 225.500H1797" stroke="#d9796c" strokeWidth="1" />
      <Line p={SLOW_MA} c="#fafafa" />
      <Line p={MID_MA} c="#8415e8" />
      <Line p={EMA} c="#e79a25" />
      <Links p={WINS} c="#2f9645" />
      <Links p={LOSSES} c="#dd2545" />
      <path fill="#4492ca" stroke="#2f6c98" strokeWidth=".5" d={BUYS.map(([x, y]) => `M${x.toFixed(1)} ${(y - 5.2).toFixed(1)}l5.500 10h-11z`).join("")} />
      <path fill="#e45f0e" stroke="#b04a0c" strokeWidth=".5" d={SELLS.map(([x, y]) => `M${x.toFixed(1)} ${(y + 5.2).toFixed(1)}l-5.500 -10h11z`).join("")} />
      <path d="M522.7 110V869" stroke="#5a5a5a" strokeDasharray="1 2" />

      <BullBars />
      <path d="M3 767.5H1627M3 780H1627" stroke="#c8575c" opacity=".35" />
      <path d="M1627 780H1797" stroke="#7c1c2c" strokeWidth="1.4" />
      <path d="M3 740.7H1797" stroke="#8a8400" strokeWidth="2" />
      <polyline points="3,742 400,742.4 640,742.6 900,742.2 1100,741.4 1500,741.4 1627,740.8" fill="none" stroke="#ffff00" strokeWidth="1.6" />

      <path d="M3 814.6H1627" stroke="#3f9636" strokeDasharray="2 2" />
      <path d="M3 833.6H1627" stroke="#67676d" strokeDasharray="2 2" />
      <path d="M3 852.5H1627" stroke="#c01c3c" strokeDasharray="2 2" />
      <path d="M3 842.3H1797" stroke="#b89b4a" strokeWidth="1.4" />
      <Line p={RSI} c="#f2d765" />
    </svg>
  );
}

const bullTop = (v: number) => `${((72.7 - v * 0.0635) / 75) * 100}%`;
const rsiTop = (v: number) => `${((37.5 + (50 - v)) / 74) * 100}%`;

export default function App() {
  return (
    <Shell>
      <Global />
      <Body>
        <Workspace>
          <TabBar>
            <Tab $w={107} $pad={2}>NQU1<b>233</b><sup>t</sup><Chip>...</Chip><Dot /></Tab>
            <Tab $w={162} $pad={5} $active>NQU1<b>699</b><sup>t</sup><Chip $wide>505</Chip><Dot $on /><CloseMark><Cross /></CloseMark></Tab>
            <Tab $w={110} $pad={7}>NQU1<b>116</b><sup>t</sup><Chip>...</Chip><Dot /></Tab>
            <Tab $w={98} $pad={7}>NQU1<b>78</b><sup>t</sup><Chip>...</Chip><Dot /></Tab>
            <AddTab aria-label="Add tab"><svg width="11" height="11" stroke="currentColor" strokeWidth="1.6"><path d="M5.5 0v11M0 5.5h11" /></svg></AddTab>
            <WindowTools>
              <button>H</button>
              <button aria-label="Settings"><Gear size={12} /></button>
              <button aria-label="Restore"><svg width="12" height="12" fill="none" stroke="currentColor" strokeWidth="1.6"><path d="M2 3v7h7M11 1 5 7M5 3.5V7h4" /></svg></button>
              <button aria-label="Close"><Cross size={9} /></button>
            </WindowTools>
          </TabBar>
          <Header>
            <Stat $w={97}><TickerName>NQU1</TickerName><ProductName>E-MINI NASDAQ 100</ProductName></Stat>
            <Stat $w={116}><StatLabel>LAST</StatLabel><StatMain $red>15609.75</StatMain><StatSub $red>-10.25 (-0.07%)</StatSub></Stat>
            <Stat $w={97}><StatLabel>BID</StatLabel><StatMain>15606.50</StatMain><StatSub>2</StatSub></Stat>
            <Stat $w={96}><StatLabel>ASK</StatLabel><StatMain>15610.50</StatMain><StatSub>1</StatSub></Stat>
            <Stat $w={134}><StatLabel>POSITION</StatLabel><StatMain>0</StatMain><StatSub>-.-- USD</StatSub></Stat>
            <OrderGrid>
              <OrderButton>Buy Mkt</OrderButton>
              <OrderButton $sell>Sell Mkt</OrderButton>
              <OrderButton>Join Bid</OrderButton>
              <OrderButton $sell>Join Ask</OrderButton>
            </OrderGrid>
            <Controls>
              <ControlRow>
                <Qty><input aria-label="Quantity" defaultValue="1" /><button aria-label="Quantity presets"><Chevron /></button></Qty>
                <ExitGroup><button>Exit at Mkt &amp; Cxl</button><button aria-label="More exits"><Chevron /></button></ExitGroup>
              </ControlRow>
              <ControlRow>
                <BracketLabel htmlFor="brackets">BRACKETS</BracketLabel>
                <SelectBox><select id="brackets" defaultValue="NQ1(15)"><option>NQ1(15)</option></select><Chevron /></SelectBox>
                <IconButton aria-label="Bracket settings"><Gear size={14} /></IconButton>
                <Toggle><ToggleOption $on>DAY</ToggleOption><ToggleOption>GTC</ToggleOption></Toggle>
                <IconButton aria-label="Order settings"><Gear size={14} /></IconButton>
              </ControlRow>
            </Controls>
          </Header>
          <ChartFrame>
            <Plot>
              <Chart />
              <PaneTitle style={{ top: `${(625 / 759) * 100}%` }}>Bulls vs Bears</PaneTitle>
              <PaneTitle style={{ top: `${(699 / 759) * 100}%` }}>Relative Strength Index</PaneTitle>
            </Plot>
            <PriceAxis>
              <AxisPane $share={610} $clip>
                <Ladder>{PRICES.map((p) => <span key={p}>{p === 15610 ? null : `${p}.00`}</span>)}</Ladder>
                <Badge $bg="#fa8d72" $fg="#fff" style={{ top: `${((priceY(15609.75) - 110) / 610) * 100}%` }}>15609.75</Badge>
              </AxisPane>
              <AxisPane $share={75}>
                <AxisMark style={{ top: bullTop(412) }}>400</AxisMark>
                <AxisMark style={{ top: bullTop(12) }}>0</AxisMark>
                <Badge $bg="#fffd00" $fg="#222200" style={{ top: bullTop(818) }}>818</Badge>
                <Badge $bg="#f63154" $fg="#3a0610" style={{ top: bullTop(201) }}>201</Badge>
              </AxisPane>
              <AxisPane $share={74}>
                <AxisMark style={{ top: rsiTop(51) }}>50</AxisMark>
                <Badge $bg="#ffe070" $fg="#2c2610" style={{ top: rsiTop(41) }}>41</Badge>
              </AxisPane>
            </PriceAxis>
            <TimeAxis>
              {TIMES.map(({ x, t }) => <span key={t} style={{ left: `${(x / PLOT_W) * 100}%` }}>{t}</span>)}
              <CrossLabel style={{ left: `${(523 / PLOT_W) * 100}%` }}>09/08/2021 11:57:35 am</CrossLabel>
            </TimeAxis>
          </ChartFrame>
        </Workspace>
        <Sidebar>
          <SideButton $top={9} aria-label="Community"><svg width="24" height="24" fill="none" stroke="currentColor" strokeWidth="2"><circle cx="12" cy="12" r="10.5" /><path d="M6 12l3-2V6l3-2 3 4 4 1-1 4-3 1-1 5-2-3-2-3z" fill="currentColor" stroke="none" /></svg></SideButton>
          <SideButton $top={23} aria-label="Chat"><svg width="24" height="24" fill="none" stroke="currentColor" strokeWidth="2"><path d="M22 3H2v12h3v3l3-3h2M22 9H12v8h10" /></svg></SideButton>
          <SideButton $top={24} aria-label="Alerts"><svg width="24" height="24" fill="none" stroke="currentColor" strokeWidth="2"><path d="M12 3 1.5 22h21zM12 9v7M12 17.5v2.5" /></svg></SideButton>
          <SideButton $top={21} aria-label="Columns"><svg width="24" height="24" fill="none" stroke="currentColor" strokeWidth="2"><path d="M8 9v9M12 9v9M16 9v9" /></svg></SideButton>
          <SideButton $top={17} aria-label="People"><svg width="24" height="24" fill="#808080"><circle cx="7" cy="7" r="4" /><circle cx="16" cy="7" r="5" /><path d="M0 20v-4q0-4 5-5 4 0 4 3l-2 6zM8 20q0-8 6-8h8v8z" /></svg></SideButton>
          <SideButton $top={27} aria-label="Leagues"><svg width="24" height="30" fill="#6c6d70"><path d="M5 1h14v12q-2 5-6 5t-6-5q-6 0-6-6V3h4zM5 5H3v4q0 2 3 2zM10 18h6v3h-6z" fillRule="evenodd" /><path d="M5 22h14v6H5z" /><path d="m12 5 1 3h3l-2 2 1 3-3-2-3 2 1-3-2-2h3z" fill="#000" /></svg></SideButton>
          <HelpTab>Tradovate Help<svg width="10" height="10" fill="currentColor"><path d="M0 5 5 0l5 5-5 5z" /></svg></HelpTab>
          <SideButton $top={62} aria-label="Help"><svg width="24" height="24" fill="none" stroke="currentColor" strokeWidth="1.6"><circle cx="12" cy="12" r="10.5" /><path d="M8.5 9.500q0-3.500 3.500-3.500t3.500 3-3.500 4.500v2M12 17v2" strokeWidth="2" /></svg></SideButton>
        </Sidebar>
      </Body>
      <Strip><div /></Strip>
    </Shell>
  );
}
